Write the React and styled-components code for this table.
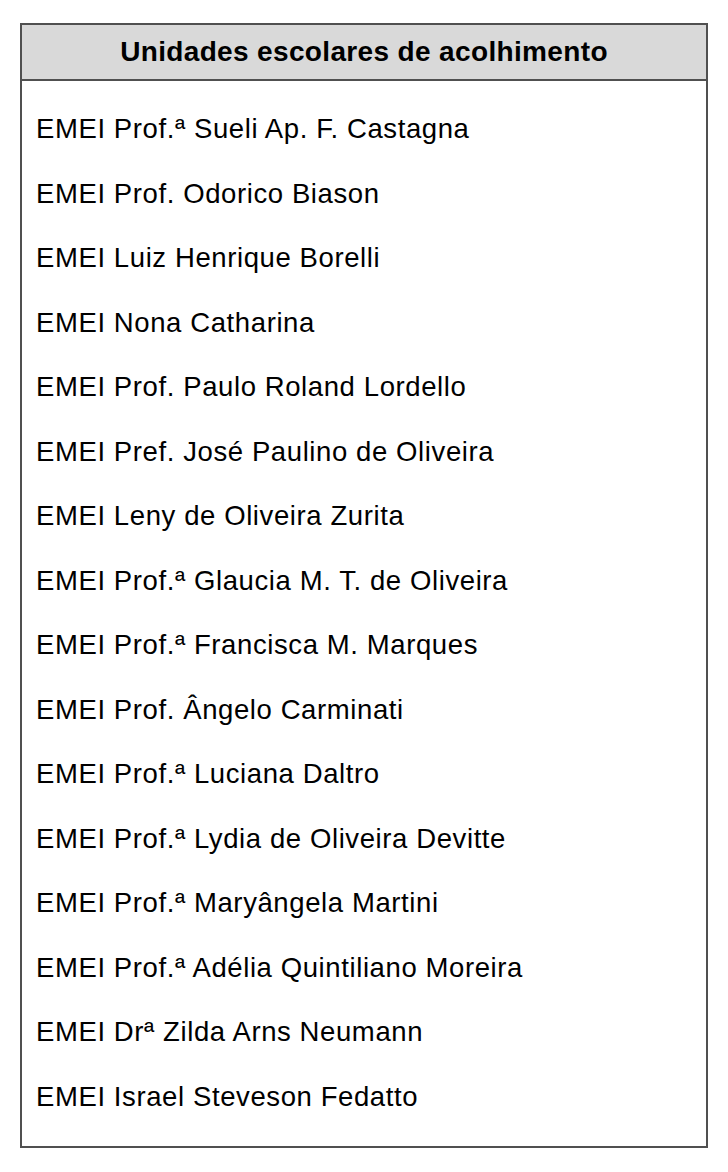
import React from 'react'
import styled, { createGlobalStyle } from 'styled-components'

const GlobalStyle = createGlobalStyle`
  html, body {
    margin: 0;
    padding: 0;
    background: #ffffff;
  }
  body {
    font-family: "Liberation Sans", Arial, sans-serif;
    color: #000000;
  }
`

const Page = styled.div`
  padding: 23px 0 0 20px;
`

const Table = styled.section`
  width: 688px;
  box-sizing: border-box;
  border: 2px solid #505050;
`

const Header = styled.header`
  height: 54px;
  display: flex;
  align-items: center;
  justify-content: center;
  background: #d9d9d9;
  border-bottom: 2px solid #505050;
  font-size: 28px;
  font-weight: bold;
  letter-spacing: 0.35px;
`

const List = styled.ul`
  list-style: none;
  margin: 0;
  padding: 16px 0 17px 14px;
`

const Row = styled.li`
  height: 64.5px;
  line-height: 64.5px;
  font-size: 27.5px;
  letter-spacing: 0.6px;
  white-space: nowrap;
`

const schools = [
  'EMEI Prof.ª Sueli Ap. F. Castagna',
  'EMEI Prof. Odorico Biason',
  'EMEI Luiz Henrique Borelli',
  'EMEI Nona Catharina',
  'EMEI Prof. Paulo Roland Lordello',
  'EMEI Pref. José Paulino de Oliveira',
  'EMEI Leny de Oliveira Zurita',
  'EMEI Prof.ª Glaucia M. T. de Oliveira',
  'EMEI Prof.ª Francisca M. Marques',
  'EMEI Prof. Ângelo Carminati',
  'EMEI Prof.ª Luciana Daltro',
  'EMEI Prof.ª Lydia de Oliveira Devitte',
  'EMEI Prof.ª Maryângela Martini',
  'EMEI Prof.ª Adélia Quintiliano Moreira',
  'EMEI Drª Zilda Arns Neumann',
  'EMEI Israel Steveson Fedatto',
]

const App = () => (
  <Page>
    <GlobalStyle />
    <Table>
      <Header>Unidades escolares de acolhimento</Header>
      <List>
        {schools.map(name => (
          <Row key={name}>{name}</Row>
        ))}
      </List>
    </Table>
  </Page>
)

export default App
